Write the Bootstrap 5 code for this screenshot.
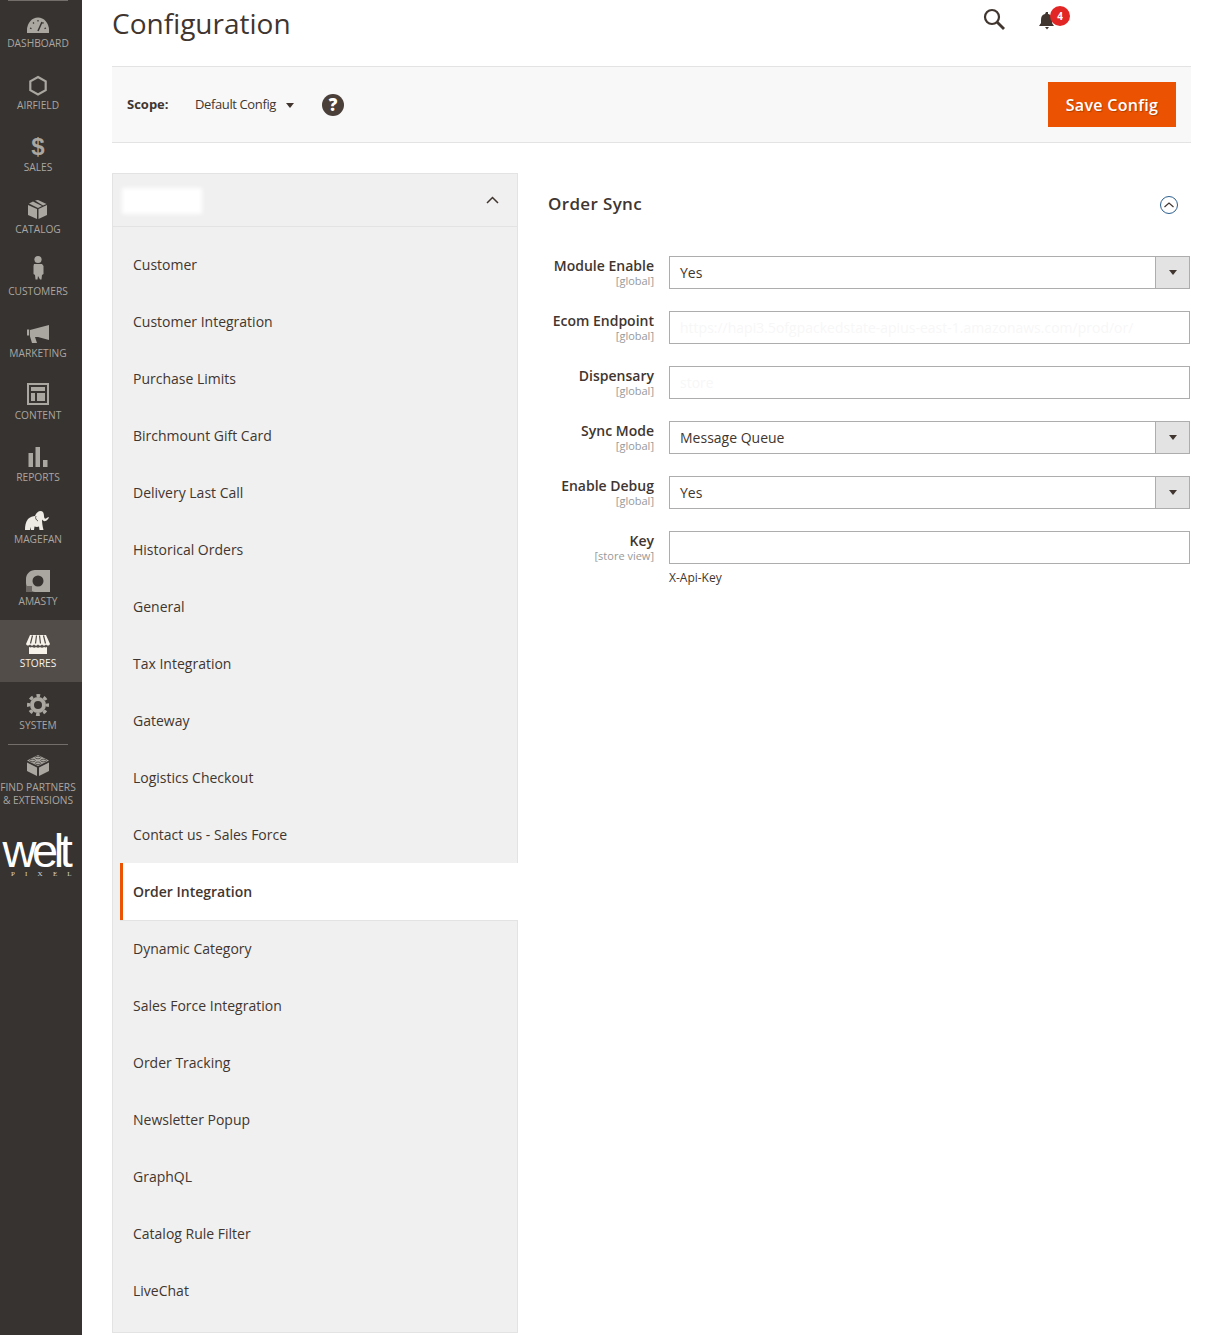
<!DOCTYPE html>
<html lang="en">
<head>
  <meta charset="UTF-8" />
  <title>Configuration</title>
  <link href="https://cdn.jsdelivr.net/npm/bootstrap@5.3.0/dist/css/bootstrap.min.css" rel="stylesheet"/>
  <style>
    body { font-family: "Open Sans", "Noto Sans", sans-serif; color: #41362f; font-size: 14px; background: #fff; height: 1335px; overflow: hidden; }
    .side-menu { width: 82px; height: 1335px; background: #373330; flex: none; overflow: hidden; }
    .side-item { height: 62px; padding: 10px 6px 0 0; color: #aaa6a0; font-size: 10.2px; line-height: 13px; text-align: center; white-space: nowrap; }
    .side-item svg { display: block; height: 24px; width: 36px; margin: 0 auto 3px; fill: #aaa6a0; overflow: visible; }
    .side-glyph { height: 24px; margin-bottom: 3px; font-family: "Liberation Sans", sans-serif; font-size: 24px; font-weight: 700; line-height: 26px; }
    .side-item.on { background: #524d49; color: #f7f3eb; }
    .side-item.on svg { fill: #f7f3eb; }
    .side-item.wide { height: 85px; padding-top: 9px; }
    .side-rule { height: 1px; background: #736e69; margin: 0 14px 0 8px; }
    .side-top { height: 1px; background: #736e69; margin: 0 14px -1px 8px; }
    .logo-word { color: #fff; font-family: "Liberation Sans", sans-serif; font-size: 47px; line-height: 36px; letter-spacing: -4.4px; text-align: center; margin-top: 3px; padding-right: 11px; }
    .logo-sub { color: #d8d8d8; font-family: "Liberation Serif", serif; font-size: 7px; line-height: 8px; letter-spacing: 10.2px; padding-left: 11px; white-space: nowrap; margin-top: 1px; }
    .main-area { width: 1079px; margin-left: 30px; flex: none; }
    .top-row { height: 66px; padding-top: 4px; }
    .page-title { font-size: 28px; font-weight: 400; line-height: 38px; margin: 0; color: #41362f; }
    .top-search { position: absolute; left: 982px; top: 7px; }
    .top-bell { position: absolute; left: 1037px; top: 9px; }
    .bell-count { position: absolute; left: 13px; top: -3px; width: 20px; height: 20px; border-radius: 50%; background: #e22626; color: #fff; font-size: 10px; font-weight: 700; line-height: 20px; text-align: center; }
    .scope-bar { height: 77px; background: #f8f8f8; border-top: 1px solid #e3e3e3; border-bottom: 1px solid #e3e3e3; padding: 0 15px; }
    .scope-name { font-size: 13px; font-weight: 700; width: 68px; }
    .scope-val { font-size: 13px; letter-spacing: -.38px; color: #41362f; }
    .scope-caret { width: 0; height: 0; border: 4.5px solid transparent; border-top: 5px solid #41362f; border-bottom: 0; margin: 2px 0 0 10px; }
    .scope-help { width: 22px; height: 22px; border-radius: 50%; background: #4a3f39; color: #fff; font-size: 17px; font-weight: 800; line-height: 22px; text-align: center; margin-left: 28px; }
    .save-btn { width: 128px; height: 45px; background: #eb5202; color: #fff; font-size: 16px; font-weight: 600; letter-spacing: .3px; border: 0; border-radius: 0; padding: 0; text-shadow: 1px 1px 1px rgba(0,0,0,.25); }
    .save-btn:hover { background: #eb5202; color: #fff; }
    .tabs-col { width: 406px; margin-top: 30px; flex: none; position: relative; }
    .tabs-head { height: 54px; background: #f0f0f0; border: 1px solid #e3e3e3; padding-right: 18px; }
    .tabs-mask { width: 80px; height: 26px; background: #fff; filter: blur(2px); margin: 2px 0 0 9px; }
    .tabs-list { background: #f0f0f0; border-left: 1px solid #e3e3e3; border-right: 1px solid #e3e3e3; border-bottom: 1px solid #e3e3e3; padding: 9px 0 13px; list-style: none; margin: 0; }
    .tabs-list li { height: 57px; line-height: 57px; padding-left: 20px; font-size: 14px; color: #41362f; }
    .tabs-list li.on { position: relative; background: #fff; font-weight: 600; margin-left: 7px; padding-left: 10px; margin-right: -1px; border-left: 3px solid #eb5202; box-shadow: 0 1px 0 #e3e3e3; }
    .form-col { width: 642px; margin: 30px 0 0 30px; flex: none; }
    .section-head { height: 83px; padding-top: 18px; }
    .section-title { font-size: 17px; font-weight: 600; letter-spacing: .35px; line-height: 26px; margin: 0; color: #41362f; }
    .section-toggle { margin: 4px 11px 0 0; }
    .field-row { height: 55px; }
    .field-label { width: 106px; text-align: right; flex: none; padding-top: 1px; }
    .field-name { font-size: 14px; font-weight: 600; line-height: 18px; }
    .field-scope { font-size: 11px; line-height: 12px; color: #999; }
    .field-box { width: 521px; height: 33px; margin-left: 15px; border: 1px solid #adadad; background: #fff; font-size: 14px; padding: 0 10px; line-height: 31px; flex: none; position: relative; }
    .field-faint { color: #f7f7f7; white-space: nowrap; overflow: hidden; display: block; }
    .field-arrow { position: absolute; right: 0; top: 0; width: 34px; height: 31px; background: #e3e3e3; border-left: 1px solid #adadad; }
    .field-arrow::after { content: ""; position: absolute; left: 13px; top: 13px; border: 4px solid transparent; border-top: 5px solid #41362f; border-bottom: 0; }
    .field-note { font-size: 12px; line-height: 16px; margin: -16px 0 0 121px; }
  </style>
</head>
<body class="d-flex">
  <nav class="side-menu">
    <div class="side-top"></div>
    <div class="side-item"><svg viewBox="0 0 36 24"><path d="M7 23v-3a11 12.500 0 0 1 22 0v3z"/><path d="M18 21l4-9" fill="none" stroke="#373330" stroke-width="1.500"/><path d="M10 18l1.500.6M13 12.500l1 1M18 10v1.500M23.500 12.500l-1 1M26 18l-1.500.6" fill="none" stroke="#373330" stroke-width="1.200"/></svg>DASHBOARD</div>
    <div class="side-item"><svg viewBox="0 0 36 24"><path d="M18 5l7.700 4.400v8.700L18 22.500l-7.700-4.400V9.400z" fill="none" stroke="#aaa6a0" stroke-width="2.200"/></svg>AIRFIELD</div>
    <div class="side-item"><div class="side-glyph">$</div>SALES</div>
    <div class="side-item"><svg viewBox="0 0 36 24"><path d="M8 9l9 4v10l-9-4zM18.500 13l8.500-4v10l-8.500 4zM9 7.500l4-2 9 4.500-4 2zM15 4.500l3-.5 8.500 4-3.500 1.500z"/></svg>CATALOG</div>
    <div class="side-item"><svg viewBox="0 0 36 24"><circle cx="18" cy="1.500" r="3.600"/><path d="M14 6h8l1.500 2v8l-1.500 1-.5 4.500h-1.500L18 18l-.5 3.500h-2L15 17l-1.500-1V8z"/></svg>CUSTOMERS</div>
    <div class="side-item"><svg viewBox="0 0 36 24"><path d="M29 5v15l-11-3h-3l2 6h-5l-2-6.500V10zM7 9.500h2.200v6H7z"/></svg>MARKETING</div>
    <div class="side-item"><svg viewBox="0 0 36 24"><path fill-rule="evenodd" d="M7 1h22v22H7zM9 3v18h18V3zM11 5h14v4H11zM11 11h4v8h-4zM17 11h8v8h-8z"/></svg>CONTENT</div>
    <div class="side-item"><svg viewBox="0 0 36 24"><path d="M8.500 9h4.500v14H8.500zM15.500 3h4.500v20h-4.500zM23 16h4.500v7H23z"/></svg>REPORTS</div>
    <div class="side-item"><svg viewBox="0 0 36 24" style="fill:#eeeae4"><path d="M5 24c0-4 .5-8 3-11 2-2 5-3 7-3 1-3 3-5 6-5 2 0 3 2.500 3 5 0 2 1 3 2 2.500 1-.5 2-1.500 3-1.500-.5 2-2 3.500-3.500 4-1.500.5-3-.5-3.500-1.500 0 3 .5 7 1.500 10.500h-4l-.5-3.500c-1 .5-3 .5-4.500 0l-.5 3.500h-3l-.5-3-.5 3z"/><path d="M16 10c-1 2 0 4 2 5" fill="none" stroke="#373330" stroke-width=".8"/></svg>MAGEFAN</div>
    <div class="side-item"><svg viewBox="0 0 36 24"><path fill-rule="evenodd" d="M15 2h15v22H15c-5 0-9-4-9-9v-4c0-5 4-9 9-9zM18 7.500a5.500 5.500 0 1 0 0 11 5.500 5.500 0 0 0 0-11z"/><path d="M6 18h6v6H6z" fill="#6d6864"/></svg>AMASTY</div>
    <div class="side-item on"><svg viewBox="0 0 36 24"><path d="M10 5h16l4 9c-1 2-3 2-4 .5-1 1.500-3 1.500-4 0-1 1.500-3 1.500-4 0-1 1.500-3 1.500-4 0-1 1.500-3 1.500-4 0-1 1.500-3 1.500-4-.5zM9 17c1 .5 2 .5 3 0 2 1 3 1 4 0 1 1 3 1 4 0 1 1 3 1 4 0 1 .5 2 .5 3 0v7H9z"/><path d="M12.500 5.500l-2 8M16.500 5.500l-1 8M19.500 5.500l1 8M23.500 5.500l2 8" stroke="#524d49" stroke-width="1.200"/></svg>STORES</div>
    <div class="side-item"><svg viewBox="0 0 36 24"><circle cx="18" cy="13" r="6" fill="none" stroke="#aaa6a0" stroke-width="4"/><circle cx="18" cy="13" r="9.500" fill="none" stroke="#aaa6a0" stroke-width="3" stroke-dasharray="3.730 3.730" stroke-dashoffset="1.860"/></svg>SYSTEM</div>
    <div class="side-rule"></div>
    <div class="side-item wide"><svg viewBox="0 0 36 24"><g transform="translate(0 -3)"><path d="M18 4l11 5.500-11 5.500-11-5.500zM7 11.500l10 5V25L7 20zM19 16.500l10-5V20l-10 5z"/><g fill="none" stroke="#373330" stroke-width=".7"><ellipse cx="18" cy="6.500" rx="2.800" ry="1.300"/><ellipse cx="12.500" cy="9.500" rx="2.800" ry="1.300"/><ellipse cx="23.500" cy="9.500" rx="2.800" ry="1.300"/><ellipse cx="18" cy="12.300" rx="2.800" ry="1.300"/></g></g></svg>FIND PARTNERS<br>&amp; EXTENSIONS</div>
    <div class="logo-word">welt</div>
    <div class="logo-sub">PIXEL</div>
  </nav>

  <main class="main-area">
    <div class="top-row">
      <h1 class="page-title">Configuration</h1>
      <svg class="top-search" width="24" height="24" viewBox="0 0 24 24" fill="none" stroke="#41362f" stroke-width="2.200"><circle cx="10" cy="10" r="7"/><path d="M15 15l7 7" stroke-width="2.800"/></svg>
      <div class="top-bell">
        <svg width="20" height="20" viewBox="0 0 20 20" fill="#41362f"><path d="M9 1h2v2c3 .5 4 3 4 6v3l2 3H2l2-3V9c0-3 1-5.500 4-6zM8 16h4l-2 2.500z"/></svg>
        <span class="bell-count">4</span>
      </div>
    </div>

    <div class="scope-bar d-flex align-items-center">
      <span class="scope-name">Scope:</span>
      <span class="scope-val">Default Config</span>
      <span class="scope-caret"></span>
      <span class="scope-help">?</span>
      <button class="btn save-btn ms-auto">Save Config</button>
    </div>

    <div class="d-flex">
      <div class="tabs-col">
        <div class="tabs-head d-flex align-items-center justify-content-between">
          <div class="tabs-mask"></div>
          <svg width="13" height="8" viewBox="0 0 13 8" fill="none" stroke="#41362f" stroke-width="1.500"><path d="M1 7l5.500-5.500L12 7"/></svg>
        </div>
        <ul class="tabs-list">
          <li>Customer</li>
          <li>Customer Integration</li>
          <li>Purchase Limits</li>
          <li>Birchmount Gift Card</li>
          <li>Delivery Last Call</li>
          <li>Historical Orders</li>
          <li>General</li>
          <li>Tax Integration</li>
          <li>Gateway</li>
          <li>Logistics Checkout</li>
          <li>Contact us - Sales Force</li>
          <li class="on">Order Integration</li>
          <li>Dynamic Category</li>
          <li>Sales Force Integration</li>
          <li>Order Tracking</li>
          <li>Newsletter Popup</li>
          <li>GraphQL</li>
          <li>Catalog Rule Filter</li>
          <li>LiveChat</li>
        </ul>
      </div>

      <div class="form-col">
        <div class="section-head d-flex justify-content-between align-items-start">
          <h2 class="section-title">Order Sync</h2>
          <svg class="section-toggle" width="20" height="20" viewBox="0 0 20 20" fill="none" stroke="#41362f"><circle cx="10" cy="10" r="8.500" stroke="#2d5f8f"/><path d="M5.500 12l4.500-4 4.500 4" stroke-width="1.200"/></svg>
        </div>
        <div class="field-row d-flex">
          <div class="field-label"><div class="field-name">Module Enable</div><div class="field-scope">[global]</div></div>
          <div class="field-box">Yes<span class="field-arrow"></span></div>
        </div>
        <div class="field-row d-flex">
          <div class="field-label"><div class="field-name">Ecom Endpoint</div><div class="field-scope">[global]</div></div>
          <div class="field-box"><span class="field-faint">https://hapi3.5ofgpackedstate-apius-east-1.amazonaws.com/prod/or/</span></div>
        </div>
        <div class="field-row d-flex">
          <div class="field-label"><div class="field-name">Dispensary</div><div class="field-scope">[global]</div></div>
          <div class="field-box"><span class="field-faint">store</span></div>
        </div>
        <div class="field-row d-flex">
          <div class="field-label"><div class="field-name">Sync Mode</div><div class="field-scope">[global]</div></div>
          <div class="field-box">Message Queue<span class="field-arrow"></span></div>
        </div>
        <div class="field-row d-flex">
          <div class="field-label"><div class="field-name">Enable Debug</div><div class="field-scope">[global]</div></div>
          <div class="field-box">Yes<span class="field-arrow"></span></div>
        </div>
        <div class="field-row d-flex">
          <div class="field-label"><div class="field-name">Key</div><div class="field-scope">[store view]</div></div>
          <div class="field-box"></div>
        </div>
        <div class="field-note">X-Api-Key</div>
      </div>
    </div>
  </main>

  <script src="https://cdn.jsdelivr.net/npm/bootstrap@5.3.0/dist/js/bootstrap.bundle.min.js"></script>
</body>
</html>
